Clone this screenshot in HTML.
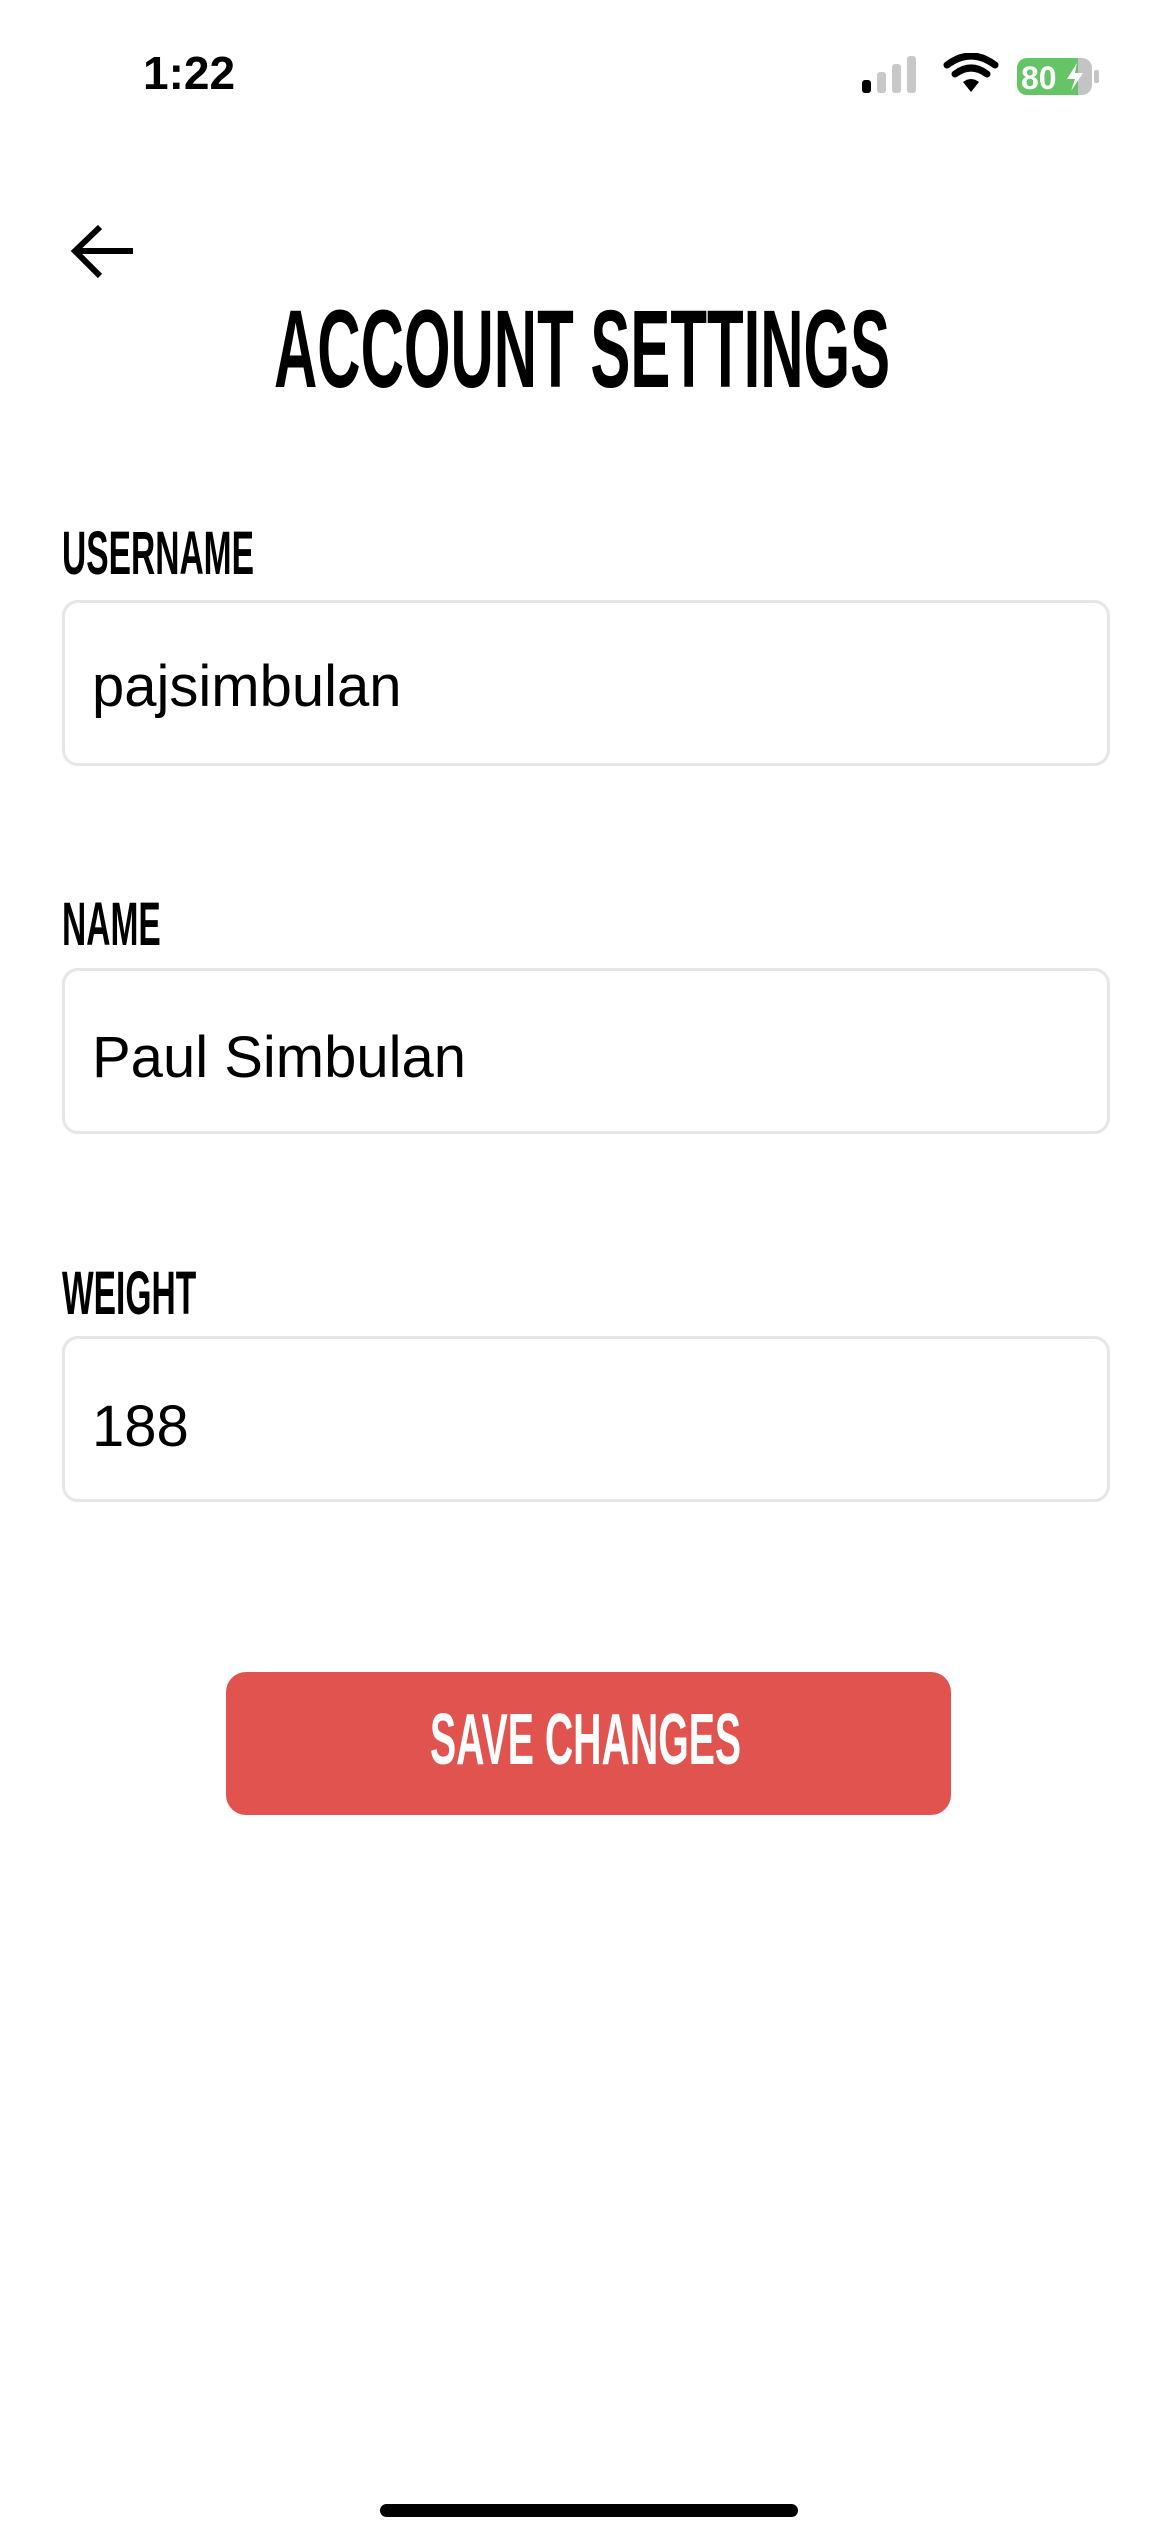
<!DOCTYPE html>
<html><head><meta charset="utf-8"><style>
html,body{margin:0;padding:0;background:#fff;}
body{width:1170px;height:2532px;position:relative;overflow:hidden;font-family:"Liberation Sans",sans-serif;}
.a{position:absolute;line-height:1;white-space:nowrap;}
.c{font-weight:bold;transform:scaleX(0.55);transform-origin:left top;color:#000;}
.box{position:absolute;left:62px;width:1042px;height:160px;border:3px solid #e5e5ea;border-radius:16px;box-sizing:content-box;}
.in{font-size:58px;left:92px;color:#000;}
</style></head><body>
<div class="a" style="left:143px;top:50px;font-size:46px;font-weight:bold;">1:22</div>
<svg class="a" style="left:855px;top:53px" width="245" height="45" viewBox="0 0 245 45">
<rect x="7" y="27" width="9" height="13" rx="3" fill="#000"/>
<rect x="22" y="19" width="9" height="21" rx="3" fill="#c8c8c8"/>
<rect x="37" y="11" width="9" height="29" rx="3" fill="#c8c8c8"/>
<rect x="52" y="3" width="9" height="37" rx="3" fill="#c8c8c8"/>
<path d="M92 12 Q116 -6 140 12" stroke="#000" stroke-width="7" fill="none" stroke-linecap="round"/>
<path d="M100 21 Q116 9 132 21" stroke="#000" stroke-width="7" fill="none" stroke-linecap="round"/>
<path d="M108 29 L116 39 L124 29 Q116 23 108 29Z" fill="#000"/>
<rect x="162" y="5" width="75" height="37" rx="10" fill="#c4c4c4"/>
<path d="M172 5 H223 V42 H172 A10 10 0 0 1 162 32 V15 A10 10 0 0 1 172 5Z" fill="#65c466"/>
<rect x="239" y="17" width="5" height="13" rx="2" fill="#c4c4c4"/>
<text x="166" y="36" font-family="Liberation Sans" font-weight="bold" font-size="32" fill="#fff">80</text>
<path d="M222 10 L212 26 H220 L216 38 L228 20 H220Z" fill="#fff"/>
</svg>
<svg class="a" style="left:66px;top:222px" width="72" height="60" viewBox="0 0 72 60">
<path d="M9 29 H67 M34 5 L9 29 L34 54" stroke="#000" stroke-width="6" fill="none"/>
</svg>
<div class="a c" style="left:274px;top:295px;font-size:110px;transform:scaleX(0.545);">ACCOUNT SETTINGS</div>
<div class="a c" style="left:62px;top:523px;font-size:61px;">USERNAME</div>
<div class="box" style="top:600px"></div>
<div class="a in" style="top:658px">pajsimbulan</div>
<div class="a c" style="left:62px;top:894px;font-size:61px;">NAME</div>
<div class="box" style="top:968px"></div>
<div class="a in" style="top:1029px">Paul Simbulan</div>
<div class="a c" style="left:62px;top:1263px;font-size:61px;">WEIGHT</div>
<div class="box" style="top:1336px"></div>
<div class="a in" style="top:1398px">188</div>
<div class="a" style="left:226px;top:1672px;width:725px;height:143px;background:#e0534e;border-radius:20px;"></div>
<div class="a c" style="left:430px;top:1704px;font-size:72px;color:#fff;transform:scaleX(0.545);">SAVE CHANGES</div>
<div class="a" style="left:380px;top:2504px;width:418px;height:13px;background:#000;border-radius:7px;"></div>
</body></html>
